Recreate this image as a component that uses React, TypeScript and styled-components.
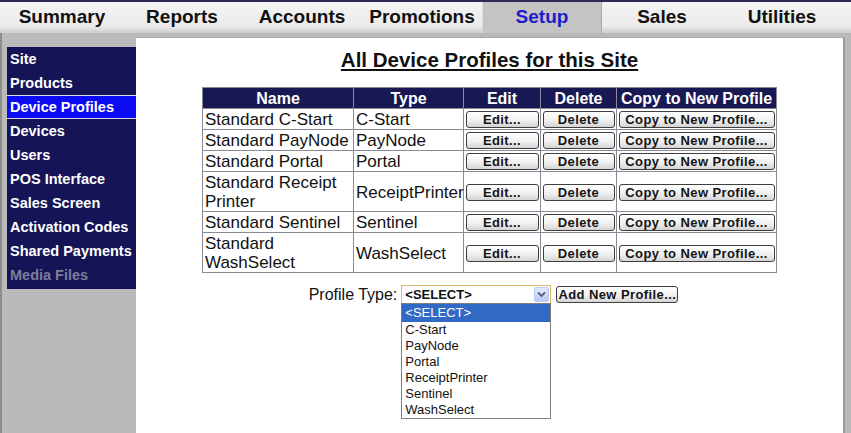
import React from 'react';
import styled, { createGlobalStyle } from 'styled-components';

const GlobalStyle = createGlobalStyle`
  html, body {
    margin: 0;
    padding: 0;
  }
  body {
    font-family: "Liberation Sans", Arial, sans-serif;
    background: #b9b9b9;
  }
`;

const Page = styled.div`
  width: 851px;
  height: 433px;
  overflow: hidden;
  display: flex;
  flex-direction: column;
  background: #b9b9b9;
`;

const TopNav = styled.div`
  height: 31px;
  border-top: 2px solid #2b2b58;
  background: linear-gradient(#f4f4f4 0%, #ebebeb 78%, #cdcdcd 100%);
  display: flex;
  padding-left: 2px;
  flex-shrink: 0;
`;

const NavTab = styled.div<{ $active?: boolean }>`
  width: 120px;
  display: flex;
  align-items: center;
  justify-content: center;
  padding-bottom: 1px;
  font: bold 19px "Liberation Sans", Arial, sans-serif;
  color: ${(p) => (p.$active ? '#1c1ccc' : '#111111')};
  background: ${(p) => (p.$active ? '#c4c4c4' : 'transparent')};
  border-left: 1px solid ${(p) => (p.$active ? '#dcdcdc' : 'transparent')};
  border-right: 1px solid ${(p) => (p.$active ? '#a8a8a8' : 'transparent')};
  box-sizing: border-box;
`;

const Body = styled.div`
  flex: 1;
  display: flex;
  min-height: 0;
`;

const Sidebar = styled.div`
  width: 129px;
  border-left: 2px solid #8e8e8e;
  padding: 14px 0 0 5px;
  background: #bababa;
`;

const Menu = styled.div`
  background: #141456;
  padding-bottom: 2px;
`;

const MenuItem = styled.div<{ $active?: boolean; $disabled?: boolean }>`
  height: 24px;
  padding-left: 3px;
  font: bold 14.5px/24px "Liberation Sans", Arial, sans-serif;
  color: ${(p) => (p.$disabled ? '#7d7d9c' : '#ffffff')};
  background: ${(p) => (p.$active ? '#0b0bf2' : 'transparent')};
  box-shadow: ${(p) => (p.$active ? 'inset 0 1px 0 #d8d8e8, inset 0 -1px 0 #d8d8e8' : 'none')};
  white-space: nowrap;
`;

const Panel = styled.div`
  margin-top: 4px;
  width: 707px;
  background: #ffffff;
  border-top: 1px solid #a9a9a9;
  border-right: 2px solid #9a9a9a;
  display: flex;
  flex-direction: column;
  align-items: center;
`;

const Title = styled.h1`
  margin: 10px 0 15px;
  font: bold 20.5px/24px "Liberation Sans", Arial, sans-serif;
  text-decoration: underline;
  color: #111111;
`;

const Table = styled.table`
  border-collapse: collapse;
  table-layout: fixed;
  width: 575px;
  border: 1px solid #8a8a96;
`;

const HeadCell = styled.th<{ $w: number }>`
  width: ${(p) => p.$w}px;
  background: #181854;
  color: #ffffff;
  font: bold 16px/19px "Liberation Sans", Arial, sans-serif;
  padding: 1px 0 0;
  border: 1px solid #8a8a96;
  text-align: center;
`;

const Cell = styled.td`
  font: 17px/19px "Liberation Sans", Arial, sans-serif;
  color: #111111;
  padding: 1px 1px 0 2px;
  border: 1px solid #8a8a96;
  vertical-align: middle;
`;

const ButtonCell = styled(Cell)`
  padding: 1px 1px 0;
  text-align: center;
`;

const GreyButton = styled.button<{ $w: number }>`
  width: ${(p) => p.$w}px;
  height: 17px;
  padding: 0;
  margin: 0 auto;
  display: block;
  border: 1px solid #3e3e3e;
  border-radius: 3px;
  background: linear-gradient(#ffffff 0%, #f0f0f0 55%, #d4d4d4 100%);
  font: bold 13px/15px "Liberation Sans", Arial, sans-serif;
  letter-spacing: 0.4px;
  color: #141414;
`;

const ProfileRow = styled.div`
  margin-top: 12px;
  margin-left: 8px;
  display: flex;
  align-items: center;
  gap: 4px;
`;

const Label = styled.span`
  font: 16px/19px "Liberation Sans", Arial, sans-serif;
  color: #111111;
`;

const SelectBox = styled.div`
  position: relative;
  width: 150px;
  height: 19px;
  box-sizing: border-box;
  border: 1px solid #d9bc6c;
  background: #ffffff;
  display: flex;
  align-items: center;
  justify-content: space-between;
  padding: 0 1px 0 3px;
  margin-right: 1px;
`;

const SelectText = styled.span`
  font: bold 13px "Liberation Sans", Arial, sans-serif;
  color: #111111;
`;

const ArrowButton = styled.span`
  width: 15px;
  height: 15px;
  box-sizing: border-box;
  border: 1px solid #b9cbf3;
  border-radius: 2px;
  background: linear-gradient(#e2eafd, #b7caf3);
  display: flex;
  align-items: center;
  justify-content: center;
`;

const DropList = styled.div`
  position: absolute;
  top: 100%;
  left: -1px;
  width: 150px;
  box-sizing: border-box;
  border: 1px solid #7c7c7c;
  background: #ffffff;
  z-index: 5;
`;

const DropItem = styled.div<{ $selected?: boolean }>`
  font: 13px/16px "Liberation Sans", Arial, sans-serif;
  height: ${(p) => (p.$selected ? '18px' : '16px')};
  line-height: ${(p) => (p.$selected ? '18px' : '16px')};
  padding-left: 3px;
  color: ${(p) => (p.$selected ? '#ffffff' : '#111111')};
  background: ${(p) => (p.$selected ? '#316ac5' : 'transparent')};
`;

const tabs = ['Summary', 'Reports', 'Accounts', 'Promotions', 'Setup', 'Sales', 'Utilities'];

const menu = [
  'Site',
  'Products',
  'Device Profiles',
  'Devices',
  'Users',
  'POS Interface',
  'Sales Screen',
  'Activation Codes',
  'Shared Payments',
  'Media Files',
];

const profiles = [
  { name: 'Standard C-Start', type: 'C-Start' },
  { name: 'Standard PayNode', type: 'PayNode' },
  { name: 'Standard Portal', type: 'Portal' },
  { name: 'Standard Receipt Printer', type: 'ReceiptPrinter' },
  { name: 'Standard Sentinel', type: 'Sentinel' },
  { name: 'Standard WashSelect', type: 'WashSelect' },
];

const options = ['<SELECT>', 'C-Start', 'PayNode', 'Portal', 'ReceiptPrinter', 'Sentinel', 'WashSelect'];

const App: React.FC = () => {
  return (
    <>
      <GlobalStyle />
      <Page>
        <TopNav>
          {tabs.map((t) => (
            <NavTab key={t} $active={t === 'Setup'}>
              {t}
            </NavTab>
          ))}
        </TopNav>
        <Body>
          <Sidebar>
            <Menu>
              {menu.map((m) => (
                <MenuItem key={m} $active={m === 'Device Profiles'} $disabled={m === 'Media Files'}>
                  {m}
                </MenuItem>
              ))}
            </Menu>
          </Sidebar>
          <Panel>
            <Title>All Device Profiles for this Site</Title>
            <Table>
              <thead>
                <tr>
                  <HeadCell $w={150}>Name</HeadCell>
                  <HeadCell $w={109}>Type</HeadCell>
                  <HeadCell $w={76}>Edit</HeadCell>
                  <HeadCell $w={75}>Delete</HeadCell>
                  <HeadCell $w={159}>Copy to New Profile</HeadCell>
                </tr>
              </thead>
              <tbody>
                {profiles.map((p) => (
                  <tr key={p.name}>
                    <Cell>{p.name}</Cell>
                    <Cell>{p.type}</Cell>
                    <ButtonCell>
                      <GreyButton $w={73}>Edit...</GreyButton>
                    </ButtonCell>
                    <ButtonCell>
                      <GreyButton $w={72}>Delete</GreyButton>
                    </ButtonCell>
                    <ButtonCell>
                      <GreyButton $w={156}>Copy to New Profile...</GreyButton>
                    </ButtonCell>
                  </tr>
                ))}
              </tbody>
            </Table>
            <ProfileRow>
              <Label>Profile Type:</Label>
              <SelectBox>
                <SelectText>&lt;SELECT&gt;</SelectText>
                <ArrowButton>
                  <svg width="9" height="7" viewBox="0 0 9 7">
                    <path d="M1 1.5 L4.5 5 L8 1.5" fill="none" stroke="#4d6185" strokeWidth="1.8" />
                  </svg>
                </ArrowButton>
                <DropList>
                  {options.map((o, i) => (
                    <DropItem key={o} $selected={i === 0}>
                      {o}
                    </DropItem>
                  ))}
                </DropList>
              </SelectBox>
              <GreyButton $w={122}>Add New Profile...</GreyButton>
            </ProfileRow>
          </Panel>
        </Body>
      </Page>
    </>
  );
};

export default App;
